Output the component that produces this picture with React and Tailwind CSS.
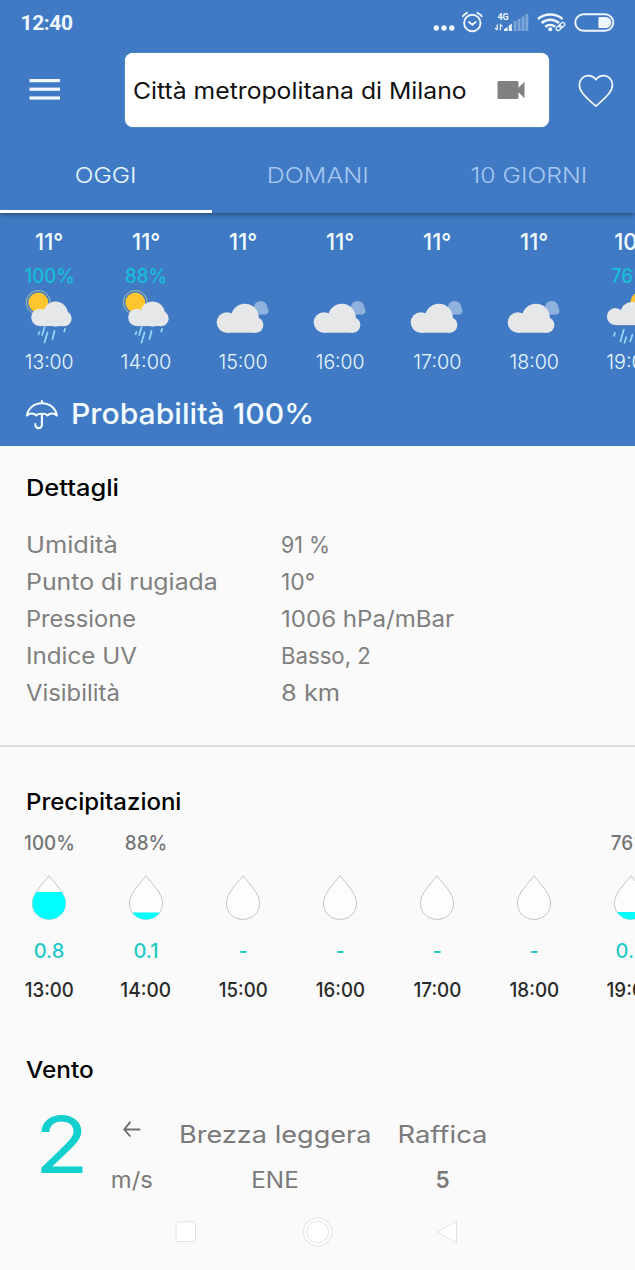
import React from "react";

function StatusBar() {
  return (
    <div className="flex h-[46px] items-center justify-between pl-[20.5px] pr-[20px] text-[#eef7ff]">
      <span className="font-['Roboto',sans-serif] text-[21px] leading-6 font-bold tracking-[-0.4px]">12:40</span>
      <div className="flex items-center">
        <svg width="22" height="26" viewBox="0 0 22 26" fill="currentColor">
          <circle cx="3.3" cy="18" r="2.7" />
          <circle cx="11" cy="18" r="2.7" />
          <circle cx="18.8" cy="18" r="2.7" />
        </svg>
        <svg className="ml-[6px]" width="23" height="26" viewBox="0 0 23 26" fill="none" stroke="currentColor" strokeWidth="1.9" strokeLinecap="round">
          <circle cx="11.3" cy="13" r="8.2" />
          <path d="M8 12l3.3 2.8 3.4-2.8" />
          <path d="M1.9 6.2a13 13 0 0 1 4.2-3.4M20.7 6.2a13 13 0 0 0-4.2-3.4" />
        </svg>
        <svg className="ml-[10px]" width="36" height="26" viewBox="0 0 36 26" fill="currentColor">
          <text x="3.4" y="9.6" fontSize="9" fontWeight="700" fontFamily="Roboto, sans-serif">4G</text>
          <path d="M3.2 14.5v5.6M1 17.8l2.2 2.4M6.4 20.2v-5.6l2.2 2" fill="none" stroke="currentColor" strokeWidth="1.2" />
          <path d="M10 21v-1.8l3.6-2.2v4zM14.8 21v-5.2l3-2.2V21z" />
          <g opacity="0.35">
            <rect x="19.6" y="11" width="2.9" height="10" />
            <rect x="23.6" y="9" width="2.9" height="12" />
            <rect x="27.6" y="6.6" width="2.9" height="14.4" />
            <rect x="31.4" y="4" width="2.9" height="17" />
          </g>
        </svg>
        <svg className="ml-[6px]" width="30" height="26" viewBox="0 0 30 26" fill="none" stroke="currentColor" strokeWidth="2.5">
          <path d="M2 9a19 19 0 0 1 24.6 0" />
          <path d="M5.6 13a13.4 13.4 0 0 1 17.4 0" />
          <path d="M9.2 16.8a8 8 0 0 1 10 0" />
          <circle cx="14.2" cy="19.3" r="2" fill="currentColor" stroke="none" />
          <g strokeWidth="1.3" transform="rotate(-42 24.4 16.6)">
            <rect x="19.4" y="14.7" width="6" height="3.8" rx="1.9" />
            <rect x="23.6" y="14.7" width="6" height="3.8" rx="1.9" />
          </g>
        </svg>
        <svg className="ml-[8px]" width="41" height="26" viewBox="0 0 41 26">
          <rect x="1.3" y="4.2" width="38" height="16.6" rx="8.3" fill="none" stroke="currentColor" strokeWidth="1.9" />
          <path d="M25.4 7h6.4a5.5 5.5 0 0 1 0 11h-6.4a1 1 0 0 1-1-1V8a1 1 0 0 1 1-1z" fill="currentColor" />
        </svg>
      </div>
    </div>
  );
}

function Toolbar() {
  return (
    <div className="flex h-[88px] items-center">
      <svg className="mb-[3px] ml-[29px]" width="32" height="24" viewBox="0 0 32 24" fill="#f1f9ff">
        <rect x="0.5" y="2" width="30.5" height="3.2" />
        <rect x="0.5" y="10.6" width="30.5" height="3.2" />
        <rect x="0.5" y="19.4" width="30.5" height="3.2" />
      </svg>
      <div className="ml-[63.5px] flex h-[73.5px] w-[424.5px] items-center rounded-[8px] bg-white pl-[8px] shadow-[0_0_1px_rgba(255,255,255,0.9)]">
        <div className="flex w-[360px] pt-[2px]">
          <span className="origin-left scale-x-[1.075] text-[23px] leading-6 whitespace-nowrap text-[#111]">Città metropolitana di Milano</span>
        </div>
        <svg width="36" height="36" viewBox="0 0 24 24" fill="#808080">
          <path d="M17 10.5V7c0-.55-.45-1-1-1H4c-.55 0-1 .45-1 1v10c0 .55.45 1 1 1h12c.55 0 1-.45 1-1v-3.5l4 4v-11l-4 4z" />
        </svg>
      </div>
      <svg className="mt-px ml-[28px]" width="38" height="36" viewBox="0 0 38 36" fill="none" stroke="#f1f9ff" strokeWidth="1.7" strokeLinejoin="round">
        <path d="M18.9 33.2C14 29 9.4 25 5.9 20.5 3.6 17.6 2.4 14.9 2.4 11.9 2.4 6.600 6.300 2.700 11.100 2.700c3.200 0 6 1.400 7.800 4 1.900-2.600 4.700-4 7.800-4 4.900 0 8.700 3.900 8.700 9.200 0 3-1.200 5.700-3.500 8.600-3.500 4.500-8.100 8.500-13 12.700z" />
      </svg>
    </div>
  );
}

function Tabs() {
  return (
    <div className="grid h-[79px] grid-cols-3 text-[22px] leading-6 font-light whitespace-nowrap text-[#a6c8f0]">
      <div className="flex justify-center border-b-[3.5px] border-white pt-[29px] text-[#e9f8ff]">
        <span className="scale-x-[1.12]">OGGI</span>
      </div>
      <div className="flex justify-center pt-[29px]">
        <span className="scale-x-[1.14]">DOMANI</span>
      </div>
      <div className="flex justify-center pt-[29px]">
        <span className="scale-x-[1.125]">10 GIORNI</span>
      </div>
    </div>
  );
}

function SunRainIcon() {
  return (
    <svg width="60" height="57" viewBox="0 0 60 57">
      <circle cx="19.3" cy="14.5" r="12" fill="none" stroke="#a9bfae" strokeWidth="1" />
      <circle cx="19.3" cy="14.5" r="10" fill="#fec52e" />
      <g fill="#e6e7e9">
        <circle cx="20.8" cy="29.4" r="8.6" />
        <circle cx="36.6" cy="26" r="12.4" />
        <circle cx="45" cy="30.5" r="7.7" />
        <rect x="20.5" y="26" width="24.8" height="12.1" />
      </g>
      <path d="M20.7 43.3l-1.4 3.7M25.7 38.7l-2.7 9M28.7 43.7l-3.4 11.600M35.700 42.300l-2.400 9.400M46.300 40.300l-1.300 4" stroke="#92dcfb" strokeWidth="1.7" />
    </svg>
  );
}

function CloudIcon() {
  return (
    <svg width="60" height="57" viewBox="0 0 60 57">
      <g fill="#8fb1dd">
        <circle cx="47.6" cy="19.6" r="6.7" />
        <circle cx="51.8" cy="22.8" r="3.7" />
        <rect x="43.6" y="20" width="8.3" height="6.5" />
      </g>
      <g fill="#e6e7e9">
        <circle cx="13.9" cy="34.5" r="10.2" />
        <circle cx="31.9" cy="29.7" r="13.9" />
        <circle cx="42.7" cy="37" r="7.7" />
        <rect x="13.6" y="32" width="29.4" height="12.7" />
      </g>
    </svg>
  );
}

function EveningRainIcon() {
  return (
    <svg width="60" height="57" viewBox="0 0 60 57">
      <circle cx="39.5" cy="14" r="10" fill="#fec52e" />
      <g fill="#e6e7e9">
        <circle cx="14.500" cy="28.500" r="8.600" />
        <circle cx="31" cy="25.500" r="11.500" />
        <circle cx="45" cy="29.500" r="7.700" />
        <rect x="14.500" y="26" width="30.500" height="11.200" />
      </g>
      <path d="M14 44.300l-1 4.200M23 41l-3.700 13M25.500 48.500l-2.200 7M31.700 46l-2.700 8M41 42l-2 8" stroke="#92dcfb" strokeWidth="1.7" />
    </svg>
  );
}

const DROP =
  "M24 1.8C27.5 6.400 33.500 12.500 37.300 19 39.400 22.600 40.600 26 40.600 29.300 40.600 38.600 33.200 45.400 24 45.400S7.400 38.600 7.400 29.300C7.400 26 8.600 22.600 10.700 19 14.500 12.500 20.500 6.400 24 1.800z";

function Drop({ id, top }) {
  return (
    <svg width="48" height="47" viewBox="0 0 48 47">
      <clipPath id={id}>
        <rect x="0" y={top} width="48" height={47 - top} />
      </clipPath>
      <path d={DROP} fill="#fdfdfd" stroke="#bdbdbd" strokeWidth="0.9" strokeLinejoin="round" />
      <path d={DROP} fill="#00ffff" clipPath={`url(#${id})`} />
    </svg>
  );
}

const hours = [
  { time: "13:00", temp: "11°", pct: "100%", icon: SunRainIcon, mm: "0.8", top: 18, fit: "scale-x-[0.93]", thin: "scale-x-[0.97]" },
  { time: "14:00", temp: "11°", pct: "88%", icon: SunRainIcon, mm: "0.1", top: 38.5, fit: "scale-x-[0.95]", thin: "scale-x-[1]" },
  { time: "15:00", temp: "11°", pct: "", icon: CloudIcon, mm: "-", top: 47, fit: "scale-x-[0.93]", thin: "scale-x-[0.98]" },
  { time: "16:00", temp: "11°", pct: "", icon: CloudIcon, mm: "-", top: 47, fit: "scale-x-[0.93]", thin: "scale-x-[0.97]" },
  { time: "17:00", temp: "11°", pct: "", icon: CloudIcon, mm: "-", top: 47, fit: "scale-x-[0.94]", thin: "scale-x-[0.99]" },
  { time: "18:00", temp: "11°", pct: "", icon: CloudIcon, mm: "-", top: 47, fit: "scale-x-[0.94]", thin: "scale-x-[0.98]" },
  { time: "19:00", temp: "10°", pct: "76%", icon: EveningRainIcon, mm: "0.2", top: 38, fit: "scale-x-[0.94]", thin: "scale-x-[0.99]" },
];

function Hourly() {
  return (
    <div className="flex h-[169px] overflow-hidden pl-[0.5px] whitespace-nowrap">
      {hours.map((h) => (
        <div key={h.time} className="flex w-[97px] shrink-0 flex-col items-center pt-[16.5px]">
          <span className="h-6 scale-x-[0.93] text-[23.5px] leading-6 font-medium text-[#f2fbff]">{h.temp}</span>
          <span className="mt-[10.5px] h-6 scale-x-[0.91] pl-[1px] text-[20.5px] leading-6 font-medium text-[#16bdd8]">{h.pct}</span>
          <h.icon />
          <span className={"mt-[4.5px] text-[20px] leading-6 font-light text-[#e8f7ff] " + h.thin}>{h.time}</span>
        </div>
      ))}
    </div>
  );
}

function Probability() {
  return (
    <div className="flex h-[63.5px] items-center pl-[25px]">
      <svg className="mt-[3px]" width="34" height="32" viewBox="0 0 34 32" fill="none" stroke="#f2fbff" strokeWidth="2.1" strokeLinecap="round" strokeLinejoin="round">
        <path d="M2 16.5C2.8 9.5 9 4.300 16.900 4.300S31 9.500 31.800 16.500c-2.300-2.600-7-2.600-9.300 0-1.700-2.300-9.500-2.300-11.200 0-2.300-2.600-7-2.600-9.300 0z" />
        <path d="M16.900 2v2M16.900 15v10.800a3.300 3.300 0 0 1-6.600 0v-.8" />
      </svg>
      <span className="ml-[11.5px] origin-left scale-x-[1.04] pt-px text-[29px] leading-8 font-medium text-[#f2fbff]">Probabilità 100%</span>
    </div>
  );
}

const details = [
  ["Umidità", "scale-x-[1.13]", "91 %", "scale-x-[0.95]"],
  ["Punto di rugiada", "scale-x-[1.105]", "10°", "scale-x-[1.02]"],
  ["Pressione", "scale-x-[1.05]", "1006 hPa/mBar", "scale-x-[1.07]"],
  ["Indice UV", "scale-x-[1.075]", "Basso, 2", "scale-x-[0.985]"],
  ["Visibilità", "scale-x-[1.06]", "8 km", "scale-x-[1.13]"],
];

function Details() {
  return (
    <section className="border-b-2 border-[#dedede] px-[25.5px] pt-[30px] pb-[34.5px]">
      <h2 className="w-fit origin-left scale-x-[1.105] text-[23px] leading-6 font-medium text-black">Dettagli</h2>
      <div className="mt-[26px]">
        {details.map(([label, a, value, b]) => (
          <div key={label} className="grid grid-cols-[255.5px_1fr] text-[22.5px] leading-[37px] text-[#7f7f7f]">
            <span className={"w-fit origin-left " + a}>{label}</span>
            <span className={"w-fit origin-left " + b}>{value}</span>
          </div>
        ))}
      </div>
    </section>
  );
}

function Precipitation() {
  return (
    <section className="pt-[43px]">
      <h2 className="ml-[25.5px] w-fit origin-left scale-x-[1.043] text-[23px] leading-6 font-medium text-black">Precipitazioni</h2>
      <div className="mt-[17px] flex overflow-hidden whitespace-nowrap">
        {hours.map((h) => (
          <div key={h.time} className="flex w-[97px] shrink-0 flex-col items-center text-[20px] leading-6">
            <span className="h-6 scale-x-[0.94] pl-[1.5px] font-[450] text-[#757575]">{h.pct}</span>
            <div className="mt-[19px] h-[47px]">
              <Drop id={"drop-" + h.time.slice(0, 2)} top={h.top} />
            </div>
            <span className="mt-[18px] pl-[1px] font-medium text-[#22c9c4]">{h.mm}</span>
            <span className={"mt-[15px] pl-[1px] font-medium text-[#2a2a2a] " + h.fit}>{h.time}</span>
          </div>
        ))}
      </div>
    </section>
  );
}

function Wind() {
  return (
    <section className="pt-[56px]">
      <h2 className="ml-[26px] w-fit origin-left scale-x-[1.06] text-[23px] leading-6 font-medium text-black">Vento</h2>
      <div className="mt-[22px] grid h-[92px] grid-cols-[103px_58px_228px_107px] whitespace-nowrap text-[#7a7a7a]">
        <span className="origin-left scale-x-[1.12] pl-[31px] text-[79px] leading-[80px] font-normal text-[#12d0cd]">2</span>
        <div className="flex flex-col items-center pt-[15px]">
          <svg width="20" height="20" viewBox="0 0 20 20" fill="none" stroke="#6e6e6e" strokeWidth="1.9">
            <path d="M18.2 10.5H2.5M8.3 2.8L2.3 10.5l6 7" />
          </svg>
          <span className="mt-[24.5px] scale-x-[1.06] text-[22.5px] leading-8">m/s</span>
        </div>
        <div className="flex flex-col items-center pt-[15px]">
          <span className="scale-x-[1.13] text-[24px] leading-8">Brezza leggera</span>
          <span className="mt-[12.5px] scale-x-[1.08] text-[22.5px] leading-8">ENE</span>
        </div>
        <div className="flex flex-col items-center pt-[15px]">
          <span className="scale-x-[1.14] text-[24px] leading-8">Raffica</span>
          <span className="mt-[12.5px] text-[22.5px] leading-8 font-semibold">5</span>
        </div>
      </div>
    </section>
  );
}

function NavBar() {
  return (
    <nav className="flex h-[72px] items-center pl-[171px]">
      <svg width="30" height="32" viewBox="0 0 30 32" fill="#fff" stroke="#e3e3e3">
        <rect x="5" y="6" width="19.5" height="19.5" rx="1" />
      </svg>
      <svg className="ml-[101px]" width="32" height="32" viewBox="0 0 32 32" fill="#fff" stroke="#e3e3e3">
        <circle cx="15.7" cy="16" r="14.3" />
        <circle cx="15.7" cy="16" r="10.8" />
      </svg>
      <svg className="ml-[98px]" width="30" height="32" viewBox="0 0 30 32" fill="#fff" stroke="#e3e3e3" strokeLinejoin="round">
        <path d="M24.5 5.5v21L5 16z" />
      </svg>
    </nav>
  );
}

export default function App() {
  return (
    <div className="h-[1270px] w-[635px] overflow-hidden bg-[#fafafa] font-['Inter','Noto_Sans',sans-serif]">
      <header className="relative bg-[#407ac4] shadow-[0_2px_4px_rgba(0,0,0,0.35)]">
        <StatusBar />
        <Toolbar />
        <Tabs />
      </header>
      <div className="bg-[#407ac4]">
        <Hourly />
        <Probability />
      </div>
      <Details />
      <Precipitation />
      <Wind />
      <NavBar />
    </div>
  );
}
